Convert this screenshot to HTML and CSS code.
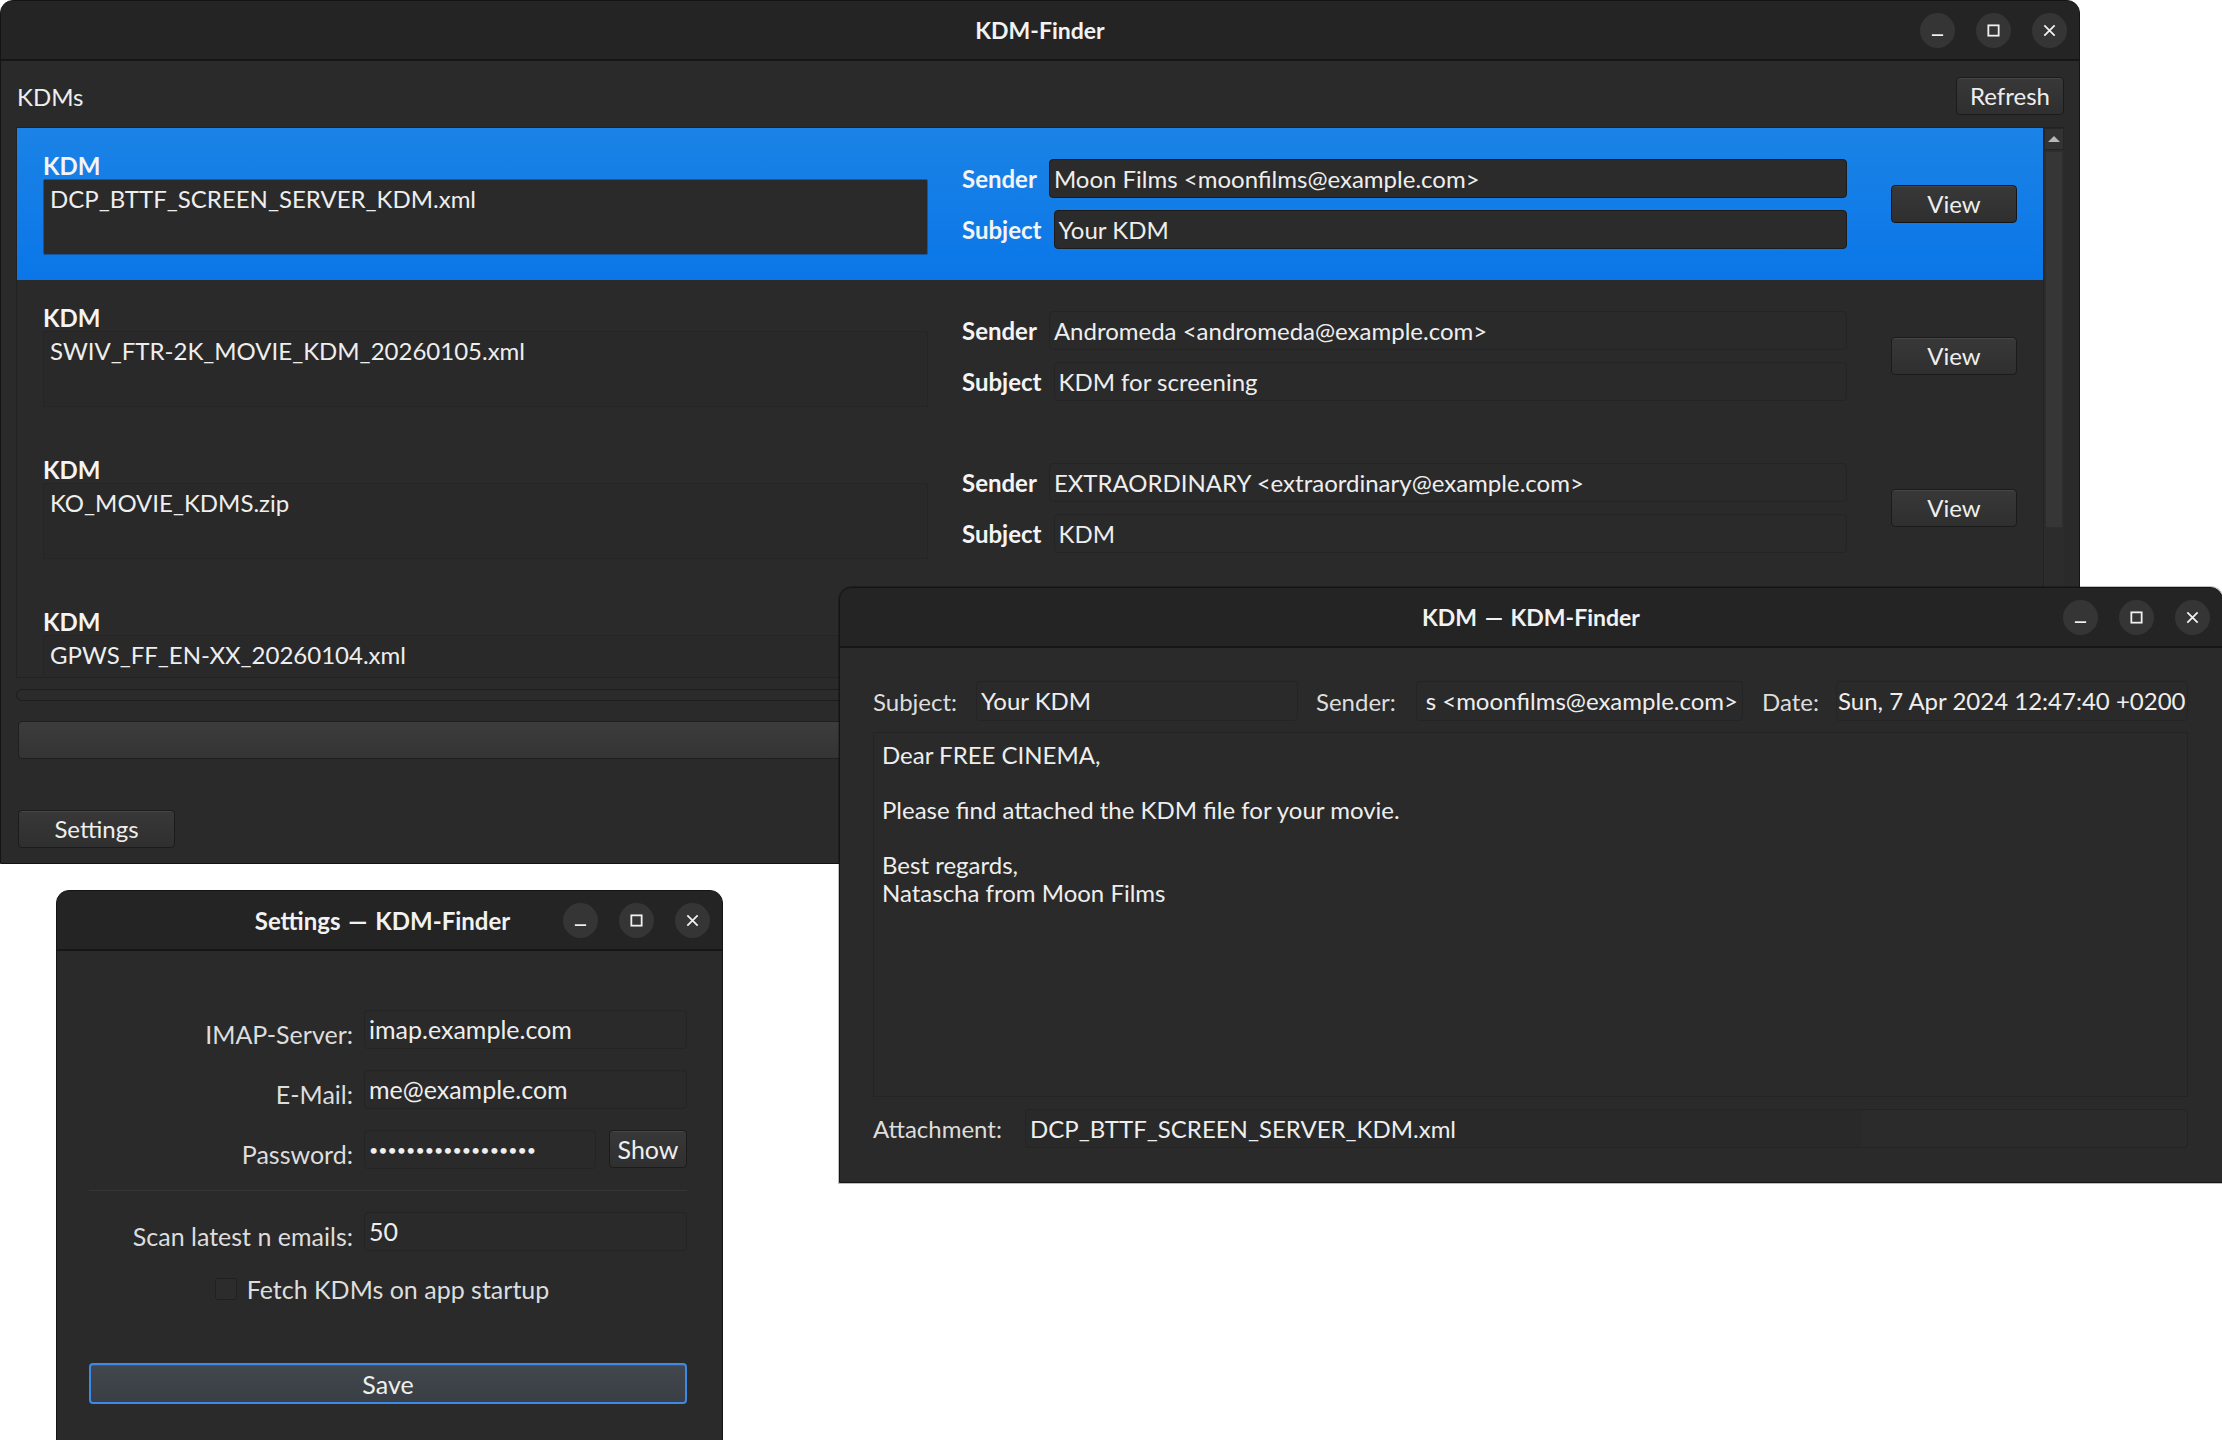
FILE: index.html
```html
<!DOCTYPE html>
<html lang="en">
<head>
    <meta charset="UTF-8">
    <title>KDM-Finder</title>
    <link rel="stylesheet" href="styles.css">
</head>
<body>
    <div class="desktop">

        <!-- main window -->
        <section class="window main-win">
            <header class="titlebar">
                <span></span>
                <span class="title">KDM-Finder</span>
                <div class="wm-buttons">
                    <span class="wm-btn"><svg viewBox="0 0 16 16"><path d="M2 13h12"/></svg></span>
                    <span class="wm-btn"><svg viewBox="0 0 16 16"><rect x="2.5" y="2.5" width="11" height="11"/></svg></span>
                    <span class="wm-btn"><svg viewBox="0 0 16 16"><path d="M2.5 2.5l11 11M13.5 2.5l-11 11"/></svg></span>
                </div>
            </header>
            <div class="main-content">
                <div class="toolbar">
                    <span>KDMs</span>
                    <button class="btn refresh-btn">Refresh</button>
                </div>
                <div class="list-frame">
                    <div class="kdm-list">
                        <div class="kdm-row selected">
                            <div class="kdm-file">
                                <div class="row-label">KDM</div>
                                <div class="file-box">DCP_BTTF_SCREEN_SERVER_KDM.xml</div>
                            </div>
                            <div class="kdm-meta">
                                <div class="meta-line"><span class="row-label">Sender</span><div class="field">Moon Films &lt;moonfilms@example.com&gt;</div></div>
                                <div class="meta-line"><span class="row-label">Subject</span><div class="field">Your KDM</div></div>
                            </div>
                            <button class="btn view-btn">View</button>
                        </div>
                        <div class="kdm-row">
                            <div class="kdm-file">
                                <div class="row-label">KDM</div>
                                <div class="file-box">SWIV_FTR-2K_MOVIE_KDM_20260105.xml</div>
                            </div>
                            <div class="kdm-meta">
                                <div class="meta-line"><span class="row-label">Sender</span><div class="field">Andromeda &lt;andromeda@example.com&gt;</div></div>
                                <div class="meta-line"><span class="row-label">Subject</span><div class="field">KDM for screening</div></div>
                            </div>
                            <button class="btn view-btn">View</button>
                        </div>
                        <div class="kdm-row">
                            <div class="kdm-file">
                                <div class="row-label">KDM</div>
                                <div class="file-box">KO_MOVIE_KDMS.zip</div>
                            </div>
                            <div class="kdm-meta">
                                <div class="meta-line"><span class="row-label">Sender</span><div class="field">EXTRAORDINARY &lt;extraordinary@example.com&gt;</div></div>
                                <div class="meta-line"><span class="row-label">Subject</span><div class="field">KDM</div></div>
                            </div>
                            <button class="btn view-btn">View</button>
                        </div>
                        <div class="kdm-row">
                            <div class="kdm-file">
                                <div class="row-label">KDM</div>
                                <div class="file-box">GPWS_FF_EN-XX_20260104.xml</div>
                            </div>
                        </div>
                    </div>
                    <div class="vscroll">
                        <div class="vscroll-arrow"></div>
                        <div class="vscroll-track">
                            <div class="vscroll-thumb"></div>
                        </div>
                    </div>
                </div>
                <div class="hscroll"></div>
                <div class="progress"></div>
                <div class="bottom-bar">
                    <button class="btn settings-btn">Settings</button>
                </div>
            </div>
        </section>

        <!-- mail viewer -->
        <section class="window mail-win">
            <header class="titlebar">
                <span></span>
                <span class="title">KDM — KDM-Finder</span>
                <div class="wm-buttons">
                    <span class="wm-btn"><svg viewBox="0 0 16 16"><path d="M2 13h12"/></svg></span>
                    <span class="wm-btn"><svg viewBox="0 0 16 16"><rect x="2.5" y="2.5" width="11" height="11"/></svg></span>
                    <span class="wm-btn"><svg viewBox="0 0 16 16"><path d="M2.5 2.5l11 11M13.5 2.5l-11 11"/></svg></span>
                </div>
            </header>
            <div class="mail-content">
                <div class="mail-head">
                    <span class="mail-label subject-label">Subject:</span>
                    <div class="field subject-field">Your KDM</div>
                    <span class="mail-label sender-label">Sender:</span>
                    <div class="field sender-field">s &lt;moonfilms@example.com&gt;</div>
                    <span class="mail-label date-label">Date:</span>
                    <div class="field date-field">Sun, 7 Apr 2024 12:47:40 +0200</div>
                </div>
                <div class="mail-body">
                    <p>Dear FREE CINEMA,</p>
                    <p>Please find attached the KDM file for your movie.</p>
                    <p>Best regards,<br>Natascha from Moon Films</p>
                </div>
                <div class="mail-attach">
                    <span class="mail-label attach-label">Attachment:</span>
                    <div class="field attach-field">DCP_BTTF_SCREEN_SERVER_KDM.xml</div>
                </div>
            </div>
        </section>

        <!-- settings dialog -->
        <section class="window settings-win">
            <header class="titlebar">
                <span></span>
                <span class="title">Settings — KDM-Finder</span>
                <div class="wm-buttons">
                    <span class="wm-btn"><svg viewBox="0 0 16 16"><path d="M2 13h12"/></svg></span>
                    <span class="wm-btn"><svg viewBox="0 0 16 16"><rect x="2.5" y="2.5" width="11" height="11"/></svg></span>
                    <span class="wm-btn"><svg viewBox="0 0 16 16"><path d="M2.5 2.5l11 11M13.5 2.5l-11 11"/></svg></span>
                </div>
            </header>
            <div class="settings-content">
                <div class="settings-form">
                    <label class="form-label">IMAP-Server:</label>
                    <div class="field">imap.example.com</div>
                    <label class="form-label">E-Mail:</label>
                    <div class="field">me@example.com</div>
                    <label class="form-label">Password:</label>
                    <div class="pw-line">
                        <div class="field pw-field">••••••••••••••••••</div>
                        <button class="btn show-btn">Show</button>
                    </div>
                    <div class="separator"></div>
                    <label class="form-label">Scan latest n emails:</label>
                    <div class="field">50</div>
                    <div class="check-line">
                        <span class="checkbox"></span>
                        <span>Fetch KDMs on app startup</span>
                    </div>
                </div>
                <button class="btn save-btn">Save</button>
            </div>
        </section>

    </div>
</body>
</html>
```

FILE: styles.css
```css
:root {
    --titlebar: #242424;
    --window-bg: #2a2a2a;
    --text: #eeeeee;
    --label: #dddddd;
    --field-bg: #2a2a2a;
    --blue-top: #1b83e6;
    --blue-bottom: #0a76e8;
}

* {
    box-sizing: border-box;
}

html, body {
    margin: 0;
    height: 100%;
}

body {
    background: #ffffff;
    font-family: Lato, "Open Sans", sans-serif;
    font-size: 24px;
    color: var(--text);
    overflow: hidden;
}

.desktop {
    position: relative;
    width: 2222px;
    height: 1440px;
}

.window {
    position: absolute;
    display: flex;
    flex-direction: column;
    background: var(--window-bg);
    border: 1px solid #141414;
    border-radius: 13px 13px 0 0;
    overflow: hidden;
}

.main-win {
    left: 0;
    top: 0;
    width: 2080px;
    height: 864px;
}

.mail-win {
    left: 839px;
    top: 587px;
    width: 1384px;
    height: 596px;
    box-shadow: 0 0 0 1px rgba(0, 0, 0, 0.25);
}

.settings-win {
    left: 56px;
    top: 890px;
    width: 667px;
    height: 560px;
}

/* title bars */

.titlebar {
    flex: none;
    height: 60px;
    display: grid;
    grid-template-columns: 1fr auto 1fr;
    align-items: center;
    background: var(--titlebar);
    border-bottom: 2px solid #161616;
}

.title {
    font-weight: 700;
    font-size: 23px;
    color: #f2f2f2;
    word-spacing: 2px;
}

.settings-win .title {
    font-size: 24px;
    margin-right: 14px;
}

.wm-buttons {
    justify-self: end;
    display: flex;
    gap: 21px;
    padding-right: 12px;
}

.wm-btn {
    width: 35px;
    height: 35px;
    border-radius: 50%;
    background: #353535;
    display: flex;
    align-items: center;
    justify-content: center;
}

.wm-btn svg {
    width: 15px;
    height: 15px;
    fill: none;
    stroke: #f0f0f0;
    stroke-width: 1.9;
}

/* common widgets */

.btn {
    font: inherit;
    color: var(--text);
    height: 38px;
    padding: 0;
    background: linear-gradient(#383838, #2f2f2f);
    border: 1px solid #1b1b1b;
    border-radius: 4px;
    box-shadow: inset 0 1px 0 rgba(255, 255, 255, 0.07);
    line-height: 36px;
}

.field {
    height: 39px;
    line-height: 37px;
    padding: 0 4px;
    background: var(--field-bg);
    border: 1px solid #242424;
    border-radius: 4px;
    white-space: nowrap;
    overflow: hidden;
}

/* main window */

.main-content {
    flex: 1;
    display: flex;
    flex-direction: column;
    padding: 16px 15px 15px 15px;
}

.toolbar {
    display: flex;
    justify-content: space-between;
    align-items: center;
    height: 38px;
    padding-left: 1px;
}

.refresh-btn {
    width: 108px;
}

.list-frame {
    margin-top: 12px;
    height: 551px;
    display: flex;
    border: 1px solid #222222;
    border-right: none;
}

.kdm-list {
    flex: 1;
    overflow: hidden;
    display: flex;
    flex-direction: column;
}

.kdm-row {
    flex: none;
    height: 152px;
    display: grid;
    grid-template-columns: 1fr 1fr 136px;
    column-gap: 34px;
    align-items: center;
    padding: 0 26px;
}

.kdm-row.selected {
    background: linear-gradient(var(--blue-top), var(--blue-bottom));
}

.row-label {
    font-weight: 700;
    color: #f4f4f4;
    line-height: 26px;
}

.file-box {
    height: 76px;
    padding: 4px 6px;
    line-height: 30px;
    background: #292929;
    border: 1px solid #252525;
    border-radius: 2px;
}

.selected .file-box {
    background: #2a2a2a;
    border-color: #16559f;
}

.kdm-meta {
    display: flex;
    flex-direction: column;
    gap: 12px;
}

.meta-line {
    display: flex;
    align-items: center;
    gap: 12px;
}

.meta-line .field {
    flex: 1;
}

.selected .field {
    border-color: #1b1b1b;
    background: #2b2b2b;
}

.view-btn {
    justify-self: end;
    width: 126px;
}

.selected .view-btn {
    border-color: #151515;
}

.vscroll {
    flex: none;
    width: 21px;
    display: flex;
    flex-direction: column;
    background: #2c2c2c;
    border-left: 1px solid #232323;
}

.vscroll-arrow {
    height: 22px;
    background: #333333;
    border: 1px solid #252525;
    display: flex;
    align-items: center;
    justify-content: center;
}

.vscroll-arrow::before {
    content: "";
    border-left: 6px solid transparent;
    border-right: 6px solid transparent;
    border-bottom: 6px solid #b8b8b8;
}

.vscroll-track {
    flex: 1;
    padding: 1px;
}

.vscroll-thumb {
    height: 377px;
    background: #363636;
    border: 1px solid #2e2e2e;
    border-radius: 2px;
}

.hscroll {
    margin-top: 11px;
    height: 12px;
    background: #2b2b2b;
    border: 1px solid #1d1d1d;
    border-radius: 6px;
}

.progress {
    margin-top: 20px;
    height: 38px;
    margin-left: 2px;
    background: linear-gradient(#3c3c3c, #343434);
    border: 1px solid #1f1f1f;
    border-radius: 4px;
}

.bottom-bar {
    margin-top: 51px;
    padding-left: 2px;
}

.settings-btn {
    width: 157px;
}

/* mail window */

.mail-content {
    flex: 1;
    display: flex;
    flex-direction: column;
    padding: 33px 34px 34px 33px;
    gap: 11px;
}

.mail-label {
    flex: none;
    color: var(--label);
    white-space: nowrap;
}

.mail-head {
    display: flex;
    align-items: center;
    height: 40px;
}

.mail-head .field {
    height: 40px;
    line-height: 38px;
    color: var(--text);
}

.subject-label {
    width: 103px;
}

.sender-label {
    width: 100px;
}

.date-label {
    width: 74px;
}

.subject-field {
    width: 322px;
    margin-right: 18px;
}

.sender-field {
    width: 327px;
    margin-right: 19px;
    text-align: right;
}

.date-field {
    flex: 1;
    padding-left: 1px;
}

.mail-body {
    flex: 1;
    padding: 8px 8px;
    background: #2a2a2a;
    border: 1px solid #242424;
    line-height: 27.5px;
}

.mail-body p {
    margin: 0 0 27.5px;
}

.mail-attach {
    display: flex;
    align-items: center;
    margin-top: 1px;
}

.attach-label {
    width: 152px;
}

.attach-field {
    flex: 1;
    background: linear-gradient(90deg, #292929 0 72%, #2b2b2b 72%);
}

/* settings dialog */

.settings-content {
    flex: 1;
    padding: 59px 35px 0 32px;
    font-size: 25px;
}

.settings-form {
    display: grid;
    grid-template-columns: 1fr 323px;
    column-gap: 11px;
    row-gap: 21px;
    align-items: center;
}

.form-label {
    text-align: right;
    color: var(--label);
    padding-top: 8px;
}

.pw-line {
    display: flex;
    gap: 13px;
}

.pw-field {
    flex: 1;
    font-size: 16px;
}

.show-btn {
    width: 78px;
}

.separator {
    grid-column: 1 / -1;
    height: 1px;
    background: #353535;
}

.check-line {
    grid-column: 1 / -1;
    display: flex;
    justify-content: center;
    align-items: center;
    gap: 10px;
    height: 34px;
    color: var(--label);
    padding-right: 12px;
}

.checkbox {
    width: 22px;
    height: 22px;
    background: #2c2c2c;
    border: 1px solid #202020;
    border-radius: 3px;
}

.save-btn {
    display: block;
    width: 100%;
    height: 41px;
    margin-top: 57px;
    background: linear-gradient(#42474e, #3a3e45);
    border: 2px solid #3a8ae6;
}
```
